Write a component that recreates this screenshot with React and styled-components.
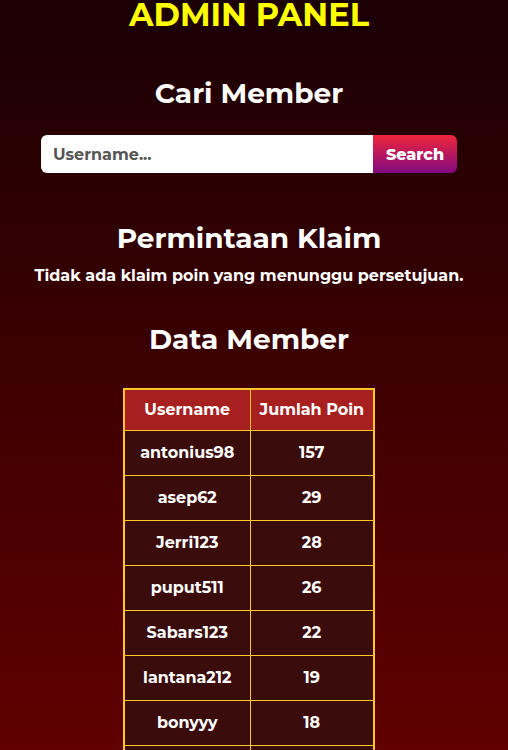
import styled, { createGlobalStyle } from "styled-components";

const GlobalStyle = createGlobalStyle`
  html {
    background: linear-gradient(180deg, #1a0003 0%, #600000 100%) fixed;
    min-height: 100%;
  }
  body {
    margin: 0;
    font-family: "Montserrat", "DejaVu Sans", "Noto Sans", sans-serif;
    color: #fff;
  }
`;

const Page = styled.main`
  display: flex;
  flex-direction: column;
  align-items: center;
  width: 498px;
  padding: 0 0 40px;
`;

const Title = styled.h1`
  margin: -4px 0 0;
  font-size: 32px;
  line-height: 38px;
  font-weight: 700;
  color: #ffff00;
`;

const Heading = styled.h2`
  margin: ${(p) => p.$top || 0}px 0 0;
  font-size: 28px;
  line-height: 34px;
  font-weight: 700;
`;

const SearchForm = styled.form`
  display: flex;
  width: 416px;
  height: 38px;
  margin-top: 25px;
  border-radius: 6px;
  overflow: hidden;
`;

const SearchInput = styled.input`
  flex: 1;
  min-width: 0;
  border: none;
  outline: none;
  padding: 0 12px;
  font-family: inherit;
  font-size: 16px;
  font-weight: 700;
  color: #333;
  background: #fff;

  &::placeholder {
    color: #555;
  }
`;

const SearchButton = styled.button`
  width: 84px;
  border: none;
  font-family: inherit;
  font-size: 16px;
  font-weight: 800;
  color: #fff;
  background: linear-gradient(180deg, #f0253a 0%, #800a80 100%);
  cursor: pointer;
`;

const Note = styled.p`
  margin: 10px 0 0;
  font-size: 16px;
  line-height: 22px;
  font-weight: 700;
`;

const Table = styled.table`
  margin-top: 32px;
  border-collapse: collapse;
  border: 2px solid #ffc629;
`;

const HeadCell = styled.th`
  height: 41px;
  padding: 0 8px;
  border: 1px solid #ffc629;
  background: #a81f20;
  font-size: 16px;
  font-weight: 700;
  width: ${(p) => p.$w}px;
  box-sizing: border-box;
`;

const Cell = styled.td`
  height: 45px;
  padding: 0 8px;
  border: 1px solid #ffc629;
  background: #3a0c0c;
  text-align: center;
  font-size: 16px;
  font-weight: 700;
  box-sizing: border-box;
`;

const members = [
  ["antonius98", 157],
  ["asep62", 29],
  ["Jerri123", 28],
  ["puput511", 26],
  ["Sabars123", 22],
  ["lantana212", 19],
  ["bonyyy", 18],
  ["gilang77", 15],
];

export default function App() {
  return (
    <>
      <GlobalStyle />
      <Page>
        <Title>ADMIN PANEL</Title>
        <Heading $top={42}>Cari Member</Heading>
        <SearchForm onSubmit={(e) => e.preventDefault()}>
          <SearchInput placeholder="Username..." />
          <SearchButton type="submit">Search</SearchButton>
        </SearchForm>
        <Heading $top={48}>Permintaan Klaim</Heading>
        <Note>Tidak ada klaim poin yang menunggu persetujuan.</Note>
        <Heading $top={35}>Data Member</Heading>
        <Table>
          <thead>
            <tr>
              <HeadCell $w={126}>Username</HeadCell>
              <HeadCell $w={124}>Jumlah Poin</HeadCell>
            </tr>
          </thead>
          <tbody>
            {members.map(([name, poin]) => (
              <tr key={name}>
                <Cell>{name}</Cell>
                <Cell>{poin}</Cell>
              </tr>
            ))}
          </tbody>
        </Table>
      </Page>
    </>
  );
}
